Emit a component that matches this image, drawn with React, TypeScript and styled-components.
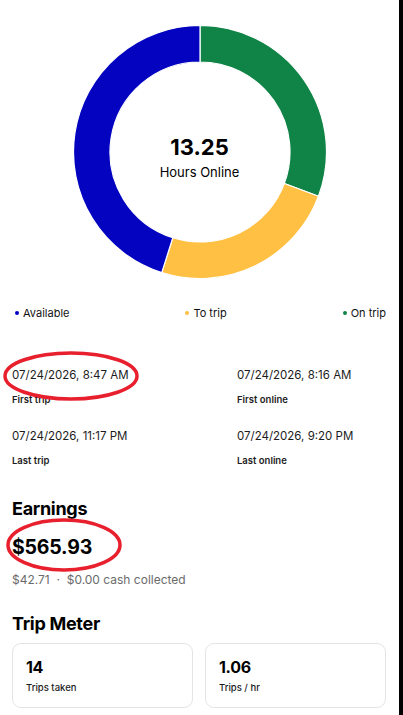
import React from 'react';
import styled, { createGlobalStyle } from 'styled-components';

const GlobalStyle = createGlobalStyle`
  html, body {
    margin: 0;
    padding: 0;
    background: #000;
  }
  body {
    font-family: Inter, "Noto Sans", "Liberation Sans", sans-serif;
    color: #000;
    -webkit-font-smoothing: antialiased;
  }
`;

const Shell = styled.div`
  display: flex;
  width: 403px;
  min-height: 715px;
  overflow: hidden;
`;

const Page = styled.main`
  position: relative;
  width: 399px;
  min-height: 715px;
  background: #fff;
`;

const ScrollTrack = styled.div`
  width: 4px;
  background: #000;
`;

const ChartWrap = styled.div`
  position: relative;
  width: 254px;
  height: 254px;
  margin: 25px auto 0;
`;

const CenterLabel = styled.div`
  position: absolute;
  inset: 0;
  display: flex;
  flex-direction: column;
  align-items: center;
  justify-content: center;
  padding-top: 11px;
`;

const BigNumber = styled.div`
  font-size: 22px;
  font-weight: 700;
  line-height: 26px;
`;

const CenterCaption = styled.div`
  font-size: 13px;
  line-height: 18px;
  margin-top: 3px;
`;

const Legend = styled.div`
  display: flex;
  justify-content: space-between;
  padding: 0 13px 0 15px;
  margin-top: 26px;
`;

const LegendItem = styled.div`
  display: flex;
  align-items: center;
  gap: 4px;
  font-size: 11px;
  line-height: 16px;
  color: #111;
`;

const Dot = styled.span<{ $color: string }>`
  width: 4px;
  height: 4px;
  border-radius: 50%;
  background: ${p => p.$color};
`;

const InfoGrid = styled.div`
  display: grid;
  grid-template-columns: 225px 1fr;
  row-gap: 21px;
  padding: 0 12px;
  margin-top: 46px;
`;

const InfoCell = styled.div`
  display: flex;
  flex-direction: column;
  gap: 10px;
`;

const InfoValue = styled.div`
  font-size: 11.5px;
  line-height: 16px;
  color: #1c1c1c;
`;

const InfoLabel = styled.div`
  font-size: 9.5px;
  font-weight: 600;
  line-height: 14px;
  color: #1c1c1c;
`;

const Section = styled.section<{ $top: number }>`
  padding: 0 12px;
  margin-top: ${p => p.$top}px;
`;

const Heading = styled.h2`
  margin: 0;
  font-size: 18px;
  font-weight: 700;
  line-height: 22px;
  letter-spacing: -0.3px;
`;

const Amount = styled.div`
  margin-top: 15px;
  font-size: 19.5px;
  font-weight: 700;
  line-height: 24px;
  letter-spacing: -0.2px;
`;

const SubText = styled.div`
  margin-top: 13px;
  font-size: 12px;
  line-height: 16px;
  color: #6b6b6b;
`;

const Cards = styled.div`
  display: grid;
  grid-template-columns: 1fr 1fr;
  gap: 12px;
  padding: 0 13px 0 12px;
  margin-top: 8px;
`;

const Card = styled.div`
  border: 1px solid #e4e4e4;
  border-radius: 9px;
  padding: 13px 13px 12px;
  display: flex;
  flex-direction: column;
  gap: 4px;
`;

const CardValue = styled.div`
  font-size: 16px;
  font-weight: 700;
  line-height: 20px;
  letter-spacing: -0.3px;
`;

const CardLabel = styled.div`
  font-size: 9.5px;
  font-weight: 500;
  line-height: 14px;
  color: #1c1c1c;
`;

const Annotation = styled.svg`
  position: absolute;
  pointer-events: none;
  overflow: visible;
`;

const COLORS = {
  available: '#0303C0',
  toTrip: '#FFC043',
  onTrip: '#108446',
};

const segments = [
  { from: 0, to: 110.5, color: COLORS.onTrip },
  { from: 110.5, to: 197.6, color: COLORS.toTrip },
  { from: 197.6, to: 360, color: COLORS.available },
];

const polar = (cx: number, cy: number, r: number, deg: number) => {
  const a = ((deg - 90) * Math.PI) / 180;
  return [cx + r * Math.cos(a), cy + r * Math.sin(a)];
};

const arcPath = (from: number, to: number, ro: number, ri: number, c: number) => {
  const end = to >= 360 ? 359.999 : to;
  const large = end - from > 180 ? 1 : 0;
  const [x1, y1] = polar(c, c, ro, from);
  const [x2, y2] = polar(c, c, ro, end);
  const [x3, y3] = polar(c, c, ri, end);
  const [x4, y4] = polar(c, c, ri, from);
  return `M${x1} ${y1} A${ro} ${ro} 0 ${large} 1 ${x2} ${y2} L${x3} ${y3} A${ri} ${ri} 0 ${large} 0 ${x4} ${y4} Z`;
};

const Donut = () => (
  <svg width="254" height="254" viewBox="0 0 254 254">
    {segments.map(s => (
      <path
        key={s.from}
        d={arcPath(s.from, s.to, 126.5, 90, 127)}
        fill={s.color}
        stroke="#fff"
        strokeWidth="1.2"
      />
    ))}
  </svg>
);

const RedRing = ({ x, y, rx, ry }: { x: number; y: number; rx: number; ry: number }) => (
  <Annotation
    width={rx * 2}
    height={ry * 2}
    style={{ left: x - rx, top: y - ry }}
    viewBox={`0 0 ${rx * 2} ${ry * 2}`}
  >
    <ellipse cx={rx} cy={ry} rx={rx - 2} ry={ry - 2} fill="none" stroke="#E8202E" strokeWidth="3.5" />
  </Annotation>
);

const info = [
  { value: '07/24/2026, 8:47 AM', label: 'First trip' },
  { value: '07/24/2026, 8:16 AM', label: 'First online' },
  { value: '07/24/2026, 11:17 PM', label: 'Last trip' },
  { value: '07/24/2026, 9:20 PM', label: 'Last online' },
];

export default function App() {
  return (
    <>
      <GlobalStyle />
      <Shell>
        <Page>
          <ChartWrap>
            <Donut />
            <CenterLabel>
              <BigNumber>13.25</BigNumber>
              <CenterCaption>Hours Online</CenterCaption>
            </CenterLabel>
          </ChartWrap>

          <Legend>
            <LegendItem><Dot $color={COLORS.available} />Available</LegendItem>
            <LegendItem><Dot $color={COLORS.toTrip} />To trip</LegendItem>
            <LegendItem><Dot $color={COLORS.onTrip} />On trip</LegendItem>
          </Legend>

          <InfoGrid>
            {info.map(i => (
              <InfoCell key={i.label}>
                <InfoValue>{i.value}</InfoValue>
                <InfoLabel>{i.label}</InfoLabel>
              </InfoCell>
            ))}
          </InfoGrid>

          <Section $top={30}>
            <Heading>Earnings</Heading>
            <Amount>$565.93</Amount>
            <SubText>$42.71 &nbsp;·&nbsp; $0.00 cash collected</SubText>
          </Section>

          <Section $top={25}>
            <Heading>Trip Meter</Heading>
          </Section>
          <Cards>
            <Card>
              <CardValue>14</CardValue>
              <CardLabel>Trips taken</CardLabel>
            </Card>
            <Card>
              <CardValue>1.06</CardValue>
              <CardLabel>Trips / hr</CardLabel>
            </Card>
          </Cards>

          <RedRing x={71} y={376} rx={68} ry={25} />
          <RedRing x={64} y={545} rx={58} ry={27} />
        </Page>
        <ScrollTrack />
      </Shell>
    </>
  );
}
